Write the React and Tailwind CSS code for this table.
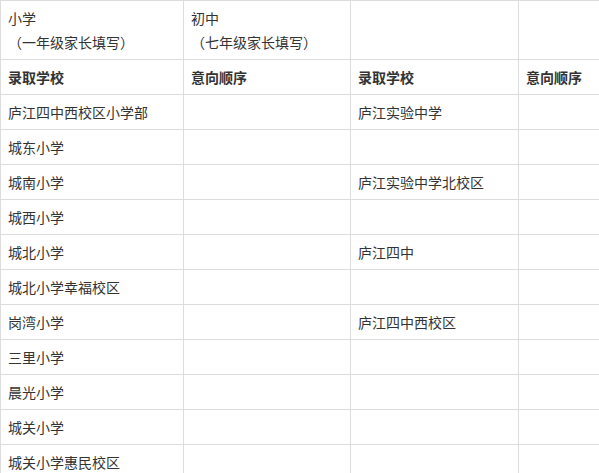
import React from "react";

const rows = [
  ["庐江四中西校区小学部", "", "庐江实验中学", ""],
  ["城东小学", "", "", ""],
  ["城南小学", "", "庐江实验中学北校区", ""],
  ["城西小学", "", "", ""],
  ["城北小学", "", "庐江四中", ""],
  ["城北小学幸福校区", "", "", ""],
  ["岗湾小学", "", "庐江四中西校区", ""],
  ["三里小学", "", "", ""],
  ["晨光小学", "", "", ""],
  ["城关小学", "", "", ""],
  ["城关小学惠民校区", "", "", ""],
];

const cell = "border border-[#dddddd] px-[7px] py-[5px] align-middle text-left";

export default function App() {
  return (
    <div
      className="w-[599px] h-[473px] overflow-hidden bg-white text-[#333333] text-[14px] leading-[24px]"
      style={{ fontFamily: '"Noto Sans CJK SC", "Noto Sans", sans-serif' }}
    >
      <table className="table-fixed border-collapse w-[686px]">
        <colgroup>
          <col className="w-[183px]" />
          <col className="w-[167px]" />
          <col className="w-[168px]" />
          <col className="w-[168px]" />
        </colgroup>
        <tbody>
          <tr>
            <td className={cell}>
              <div>小学</div>
              <div>（一年级家长填写）</div>
            </td>
            <td className={cell}>
              <div>初中</div>
              <div>（七年级家长填写）</div>
            </td>
            <td className={cell}></td>
            <td className={cell}></td>
          </tr>
          <tr className="font-bold">
            <td className={cell}>录取学校</td>
            <td className={cell}>意向顺序</td>
            <td className={cell}>录取学校</td>
            <td className={cell}>意向顺序</td>
          </tr>
          {rows.map((r, i) => (
            <tr key={i}>
              {r.map((c, j) => (
                <td key={j} className={cell + " h-[35px]"}>
                  {c}
                </td>
              ))}
            </tr>
          ))}
        </tbody>
      </table>
    </div>
  );
}
